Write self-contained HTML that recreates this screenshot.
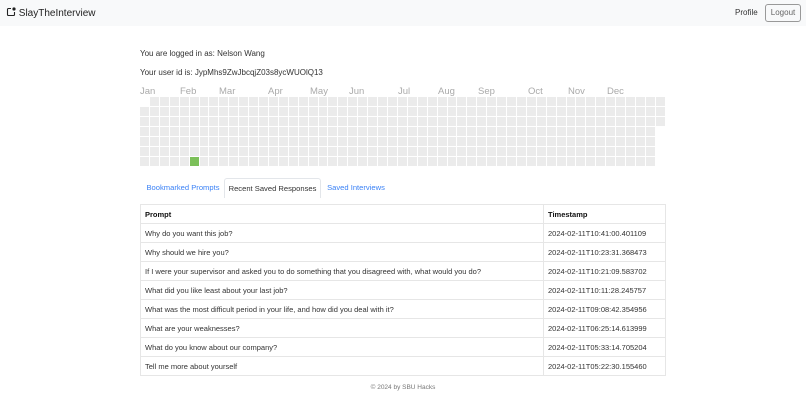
<!DOCTYPE html>
<html><head><meta charset="utf-8"><style>
*{margin:0;padding:0;box-sizing:border-box}
body{width:806px;height:400px;background:#fff;font-family:"Liberation Sans",sans-serif;color:#212529;position:relative;overflow:hidden}
.nav{position:absolute;left:0;top:0;width:806px;height:26px;background:#f8f9fa}
.brand{position:absolute;left:6px;top:7px;font-size:10px;color:#222}
.prof{position:absolute;left:735px;top:8px;font-size:8px;color:#333}
.logout{position:absolute;left:765px;top:4px;width:36px;height:18px;border:1px solid #999;border-radius:3px;font-size:8px;color:#666;text-align:center;line-height:16px}
.t{position:absolute;font-size:8px;color:#333}
.m{position:absolute;top:86px;font-size:9.5px;color:#aaa}
.c{position:absolute;height:9px;background:#ebebeb}
.tabs{position:absolute;left:140px;top:178px;width:526px;height:20px}
.tab{position:absolute;top:0;height:20px;font-size:7.6px;line-height:19px;color:#3b82f6;text-align:center;white-space:nowrap}
.tab.a{color:#333;border:1px solid #e3e6ea;border-bottom:none;border-radius:3px 3px 0 0;background:#fff}
table{position:absolute;left:140px;top:204px;width:526px;border-collapse:collapse;font-size:7.5px;color:#333}
td,th{border:1px solid #e6e6e6;height:19px;padding:0 4px;text-align:left}
th{font-weight:bold;color:#111}
td:nth-child(2),th:nth-child(2){width:122px}
.f{position:absolute;left:0;width:806px;top:384px;text-align:center;font-size:6.5px;color:#777}
</style></head><body>
<div class="nav">
<div class="brand"><svg width="10" height="10" viewBox="0 0 10 10" style="vertical-align:-1px"><path d="M5 1.5H2.5a1 1 0 0 0-1 1v5a1 1 0 0 0 1 1h5a1 1 0 0 0 1-1V5" fill="none" stroke="#222" stroke-width="1.1"/><circle cx="8" cy="2" r="1.6" fill="#222"/></svg> SlayTheInterview</div>
<div class="prof">Profile</div>
<div class="logout">Logout</div>
</div>
<div class="t" style="left:140px;top:49px">You are logged in as: Nelson Wang</div>
<div class="t" style="left:140px;top:68px">Your user id is: JypMhs9ZwJbcqjZ03s8ycWUOlQ13</div>
<div class="m" style="left:140px">Jan</div><div class="m" style="left:180px">Feb</div><div class="m" style="left:219px">Mar</div><div class="m" style="left:268px">Apr</div><div class="m" style="left:310px">May</div><div class="m" style="left:349px">Jun</div><div class="m" style="left:398px">Jul</div><div class="m" style="left:438px">Aug</div><div class="m" style="left:478px">Sep</div><div class="m" style="left:528px">Oct</div><div class="m" style="left:568px">Nov</div><div class="m" style="left:607px">Dec</div>
<div id="hm"></div>
<div class="tabs">
<div class="tab" style="left:0;width:86px">Bookmarked Prompts</div>
<div class="tab a" style="left:84px;width:97px">Recent Saved Responses</div>
<div class="tab" style="left:181px;width:70px">Saved Interviews</div>
</div>
<table>
<tr><th>Prompt</th><th>Timestamp</th></tr>
<tr><td>Why do you want this job?</td><td>2024-02-11T10:41:00.401109</td></tr>
<tr><td>Why should we hire you?</td><td>2024-02-11T10:23:31.368473</td></tr>
<tr><td>If I were your supervisor and asked you to do something that you disagreed with, what would you do?</td><td>2024-02-11T10:21:09.583702</td></tr>
<tr><td>What did you like least about your last job?</td><td>2024-02-11T10:11:28.245757</td></tr>
<tr><td>What was the most difficult period in your life, and how did you deal with it?</td><td>2024-02-11T09:08:42.354956</td></tr>
<tr><td>What are your weaknesses?</td><td>2024-02-11T06:25:14.613999</td></tr>
<tr><td>What do you know about our company?</td><td>2024-02-11T05:33:14.705204</td></tr>
<tr><td>Tell me more about yourself</td><td>2024-02-11T05:22:30.155460</td></tr>
</table>
<div class="f">© 2024 by SBU Hacks</div>
<script>
var h='';
for(var c=0;c<53;c++){
var x=Math.round(140+c*9.92),x2=Math.round(140+(c+1)*9.92),w=x2-x-1;
for(var r=0;r<7;r++){
if(c==0&&r<1)continue;if(c==52&&r>2)continue;
var y=97+r*10;
var g=(c==5&&r==6)?';background:#7cc05a':'';
h+='<div class="c" style="left:'+x+'px;width:'+w+'px;top:'+y+'px'+g+'"></div>';}}
document.getElementById('hm').innerHTML=h;
</script>
</body></html>
